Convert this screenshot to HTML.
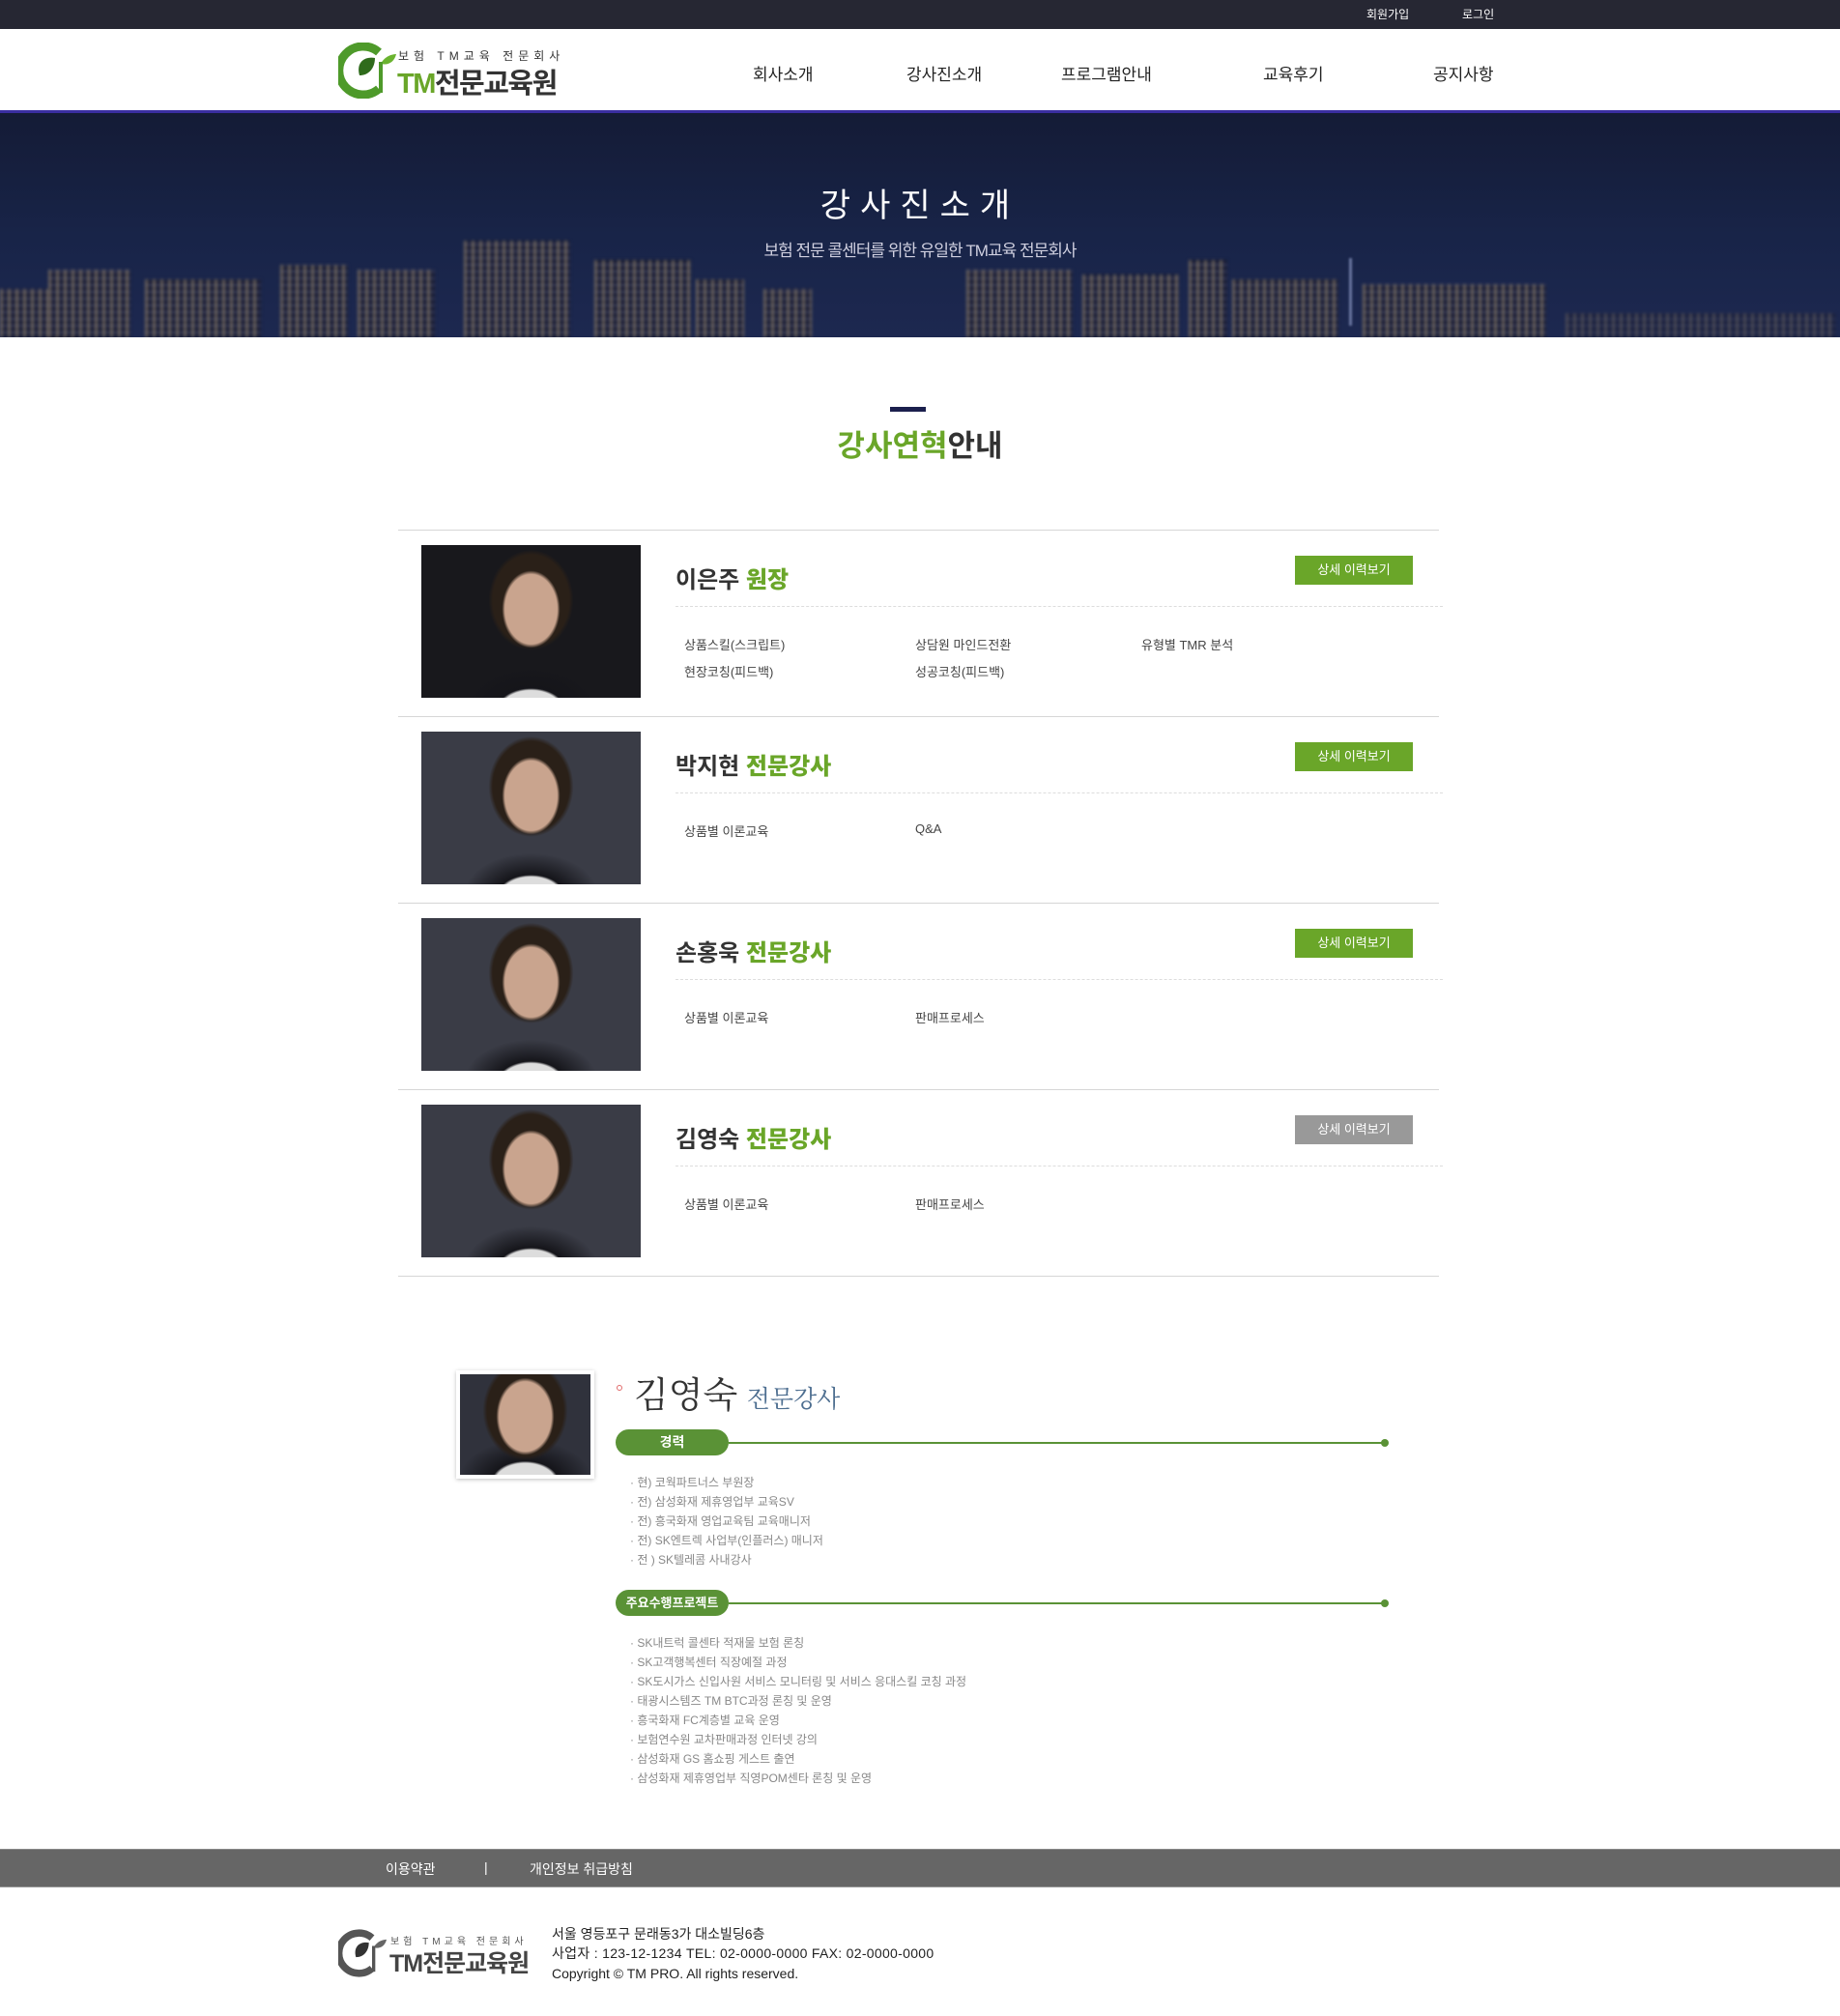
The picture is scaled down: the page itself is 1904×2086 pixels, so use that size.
<!DOCTYPE html>
<html><head><meta charset="utf-8"><style>
*{margin:0;padding:0;box-sizing:border-box}
body{width:1904px;height:2086px;position:relative;background:#fff;font-family:"Liberation Sans","Noto Sans CJK KR",sans-serif;color:#333;overflow:hidden}
.a{position:absolute;white-space:nowrap}
.top{left:0;top:0;width:1904px;height:30px;background:#262733}
.top span{position:absolute;top:6px;font-size:12px;color:#fff}
.nav{top:63px;font-size:17px;color:#222}
.banner{left:0;top:114px;width:1904px;height:235px;background:linear-gradient(#141b36,#182448 55%,#1d2850);border-top:3px solid #3a2ea0;overflow:hidden}
.bld{position:absolute;bottom:0;filter:blur(1.5px);background:repeating-linear-gradient(90deg,rgba(230,200,140,.35) 0 3px,transparent 3px 8px),repeating-linear-gradient(0deg,rgba(10,12,30,.6) 0 3px,transparent 3px 7px),#2c304c}
.row{left:412px;width:1077px;height:1px;background:#d6d6d6}
.photo{width:227px;height:158px;background:radial-gradient(ellipse 30px 40px at 50% 42%,#c9a48e 0 90%,transparent 100%),radial-gradient(ellipse 44px 52px at 50% 36%,#2a2018 0 90%,transparent 100%),radial-gradient(ellipse 70px 45px at 50% 108%,#ddd 0 45%,#15151a 50%,transparent 100%),#2c2d35}
.name{font-size:24px;font-weight:bold;color:#333}
.name b{color:#6aa629}
.btn{width:122px;height:30px;background:#6aa629;color:#fff;font-size:13px;text-align:center;line-height:30px}
.dot{left:699px;width:794px;border-top:1px dashed #ddd;height:0}
.it{font-size:13px;color:#444}
.pill{height:27px;border-radius:14px;background:#5a9236;color:#fff;font-size:14px;font-weight:bold;text-align:center;line-height:27px}
.gl{height:2px;background:#5a9236}
.gd{width:8px;height:8px;border-radius:50%;background:#5a9236}
.li{font-size:12px;color:#888;left:652px}
</style></head><body>
<div class="a top"><span style="left:1414px">회원가입</span><span style="left:1513px">로그인</span></div>

<svg class="a" style="left:350px;top:44px" width="60" height="58" viewBox="0 0 60 58"><path d="M42 10 A25 25 0 1 0 42 48" fill="none" stroke="#4e9a2a" stroke-width="9"/><path d="M22 34 C18 20 28 14 38 16 C38 26 32 34 22 34Z" fill="#2f6b1c"/><path d="M44 22 C48 14 56 12 60 12 C58 20 52 24 44 22Z" fill="#6ab32f"/><rect x="42" y="20" width="4" height="32" fill="#4e9a2a"/></svg>
<div class="a" style="left:412px;top:49px;font-size:12px;letter-spacing:5px;color:#333">보험 TM교육 전문회사</div>
<div class="a" style="left:411px;top:63px;font-size:29px;font-weight:bold;letter-spacing:-1.5px"><span style="color:#6aa629">TM</span><span style="color:#333">전문교육원</span></div>

<div class="a nav" style="left:779px">회사소개</div>
<div class="a nav" style="left:938px">강사진소개</div>
<div class="a nav" style="left:1098px">프로그램안내</div>
<div class="a nav" style="left:1307px">교육후기</div>
<div class="a nav" style="left:1483px">공지사항</div>

<div class="a banner">
<div class="bld" style="left:0;width:80px;height:50px"></div>
<div class="bld" style="left:50px;width:85px;height:70px"></div>
<div class="bld" style="left:150px;width:120px;height:60px"></div>
<div class="bld" style="left:290px;width:70px;height:75px"></div>
<div class="bld" style="left:370px;width:80px;height:70px"></div>
<div class="bld" style="left:480px;width:110px;height:100px"></div>
<div class="bld" style="left:615px;width:100px;height:80px"></div>
<div class="bld" style="left:720px;width:50px;height:60px"></div>
<div class="bld" style="left:790px;width:50px;height:50px"></div>
<div class="bld" style="left:1000px;width:110px;height:70px"></div>
<div class="bld" style="left:1120px;width:100px;height:65px"></div>
<div class="bld" style="left:1230px;width:40px;height:80px"></div>
<div class="bld" style="left:1275px;width:110px;height:60px"></div>
<div class="bld" style="left:1410px;width:190px;height:55px"></div>
<div class="bld" style="left:1620px;width:280px;height:25px;opacity:.6"></div>
<div style="position:absolute;left:1396px;top:150px;width:3px;height:70px;background:#6a76a0;filter:blur(1px)"></div>
<div class="a" style="left:0;width:1904px;top:68px;text-align:center;font-size:34px;color:#fff;letter-spacing:10px">강사진소개</div>
<div class="a" style="left:0;width:1904px;top:128px;text-align:center;font-size:17px;color:#d0d0e0;letter-spacing:-1px">보험 전문 콜센터를 위한 유일한 TM교육 전문회사</div>
</div>

<div class="a" style="left:921px;top:421px;width:37px;height:5px;background:#1b1f4d"></div>
<div class="a" style="left:0;width:1904px;top:436px;text-align:center;font-size:31px;font-weight:bold;color:#333"><span style="color:#6aa629">강사연혁</span>안내</div>

<div class="a row" style="top:548px"></div>
<div class="a row" style="top:741px"></div>
<div class="a row" style="top:934px"></div>
<div class="a row" style="top:1127px"></div>
<div class="a row" style="top:1320px"></div>

<div class="a photo" style="left:436px;top:564px;background-color:#18181c"></div>
<div class="a name" style="left:699px;top:580px">이은주 <b>원장</b></div>
<div class="a btn" style="left:1340px;top:575px">상세 이력보기</div>
<div class="a dot" style="top:627px"></div>
<div class="a it" style="left:708px;top:657px">상품스킬(스크립트)</div>
<div class="a it" style="left:947px;top:657px">상담원 마인드전환</div>
<div class="a it" style="left:1181px;top:657px">유형별 TMR 분석</div>
<div class="a it" style="left:708px;top:685px">현장코칭(피드백)</div>
<div class="a it" style="left:947px;top:685px">성공코칭(피드백)</div>

<div class="a photo" style="left:436px;top:757px;background-color:#3a3c46"></div>
<div class="a name" style="left:699px;top:773px">박지현 <b>전문강사</b></div>
<div class="a btn" style="left:1340px;top:768px">상세 이력보기</div>
<div class="a dot" style="top:820px"></div>
<div class="a it" style="left:708px;top:850px">상품별 이론교육</div>
<div class="a it" style="left:947px;top:850px">Q&amp;A</div>

<div class="a photo" style="left:436px;top:950px;background-color:#3a3c46"></div>
<div class="a name" style="left:699px;top:966px">손홍욱 <b>전문강사</b></div>
<div class="a btn" style="left:1340px;top:961px">상세 이력보기</div>
<div class="a dot" style="top:1013px"></div>
<div class="a it" style="left:708px;top:1043px">상품별 이론교육</div>
<div class="a it" style="left:947px;top:1043px">판매프로세스</div>

<div class="a photo" style="left:436px;top:1143px;background-color:#3a3c46"></div>
<div class="a name" style="left:699px;top:1159px">김영숙 <b>전문강사</b></div>
<div class="a btn" style="left:1340px;top:1154px;background:#999">상세 이력보기</div>
<div class="a dot" style="top:1206px"></div>
<div class="a it" style="left:708px;top:1236px">상품별 이론교육</div>
<div class="a it" style="left:947px;top:1236px">판매프로세스</div>

<div class="a" style="left:472px;top:1418px;width:143px;height:112px;background:#fff;box-shadow:0 1px 4px rgba(0,0,0,.25)"></div>
<div class="a photo" style="left:476px;top:1422px;width:135px;height:104px;background-color:#30323c;background-size:100% 100%"></div>
<div class="a" style="left:638px;top:1433px;width:6px;height:6px;border-radius:50%;border:1.5px solid #e06a6a"></div>
<div class="a" style="left:656px;top:1413px;font-size:37px;color:#333;font-family:'Noto Serif CJK SC','Liberation Serif',serif">김영숙 <span style="font-size:25px;color:#4d6e90">전문강사</span></div>

<div class="a pill" style="left:637px;top:1479px;width:117px">경력</div>
<div class="a gl" style="left:754px;top:1492px;width:678px"></div>
<div class="a gd" style="left:1429px;top:1489px"></div>
<div class="a li" style="top:1525px">· 현) 코웍파트너스 부원장</div>
<div class="a li" style="top:1545px">· 전) 삼성화재 제휴영업부 교육SV</div>
<div class="a li" style="top:1565px">· 전) 흥국화재 영업교육팀 교육매니저</div>
<div class="a li" style="top:1585px">· 전) SK엔트렉 사업부(인플러스) 매니저</div>
<div class="a li" style="top:1605px">· 전 ) SK텔레콤 사내강사</div>

<div class="a pill" style="left:637px;top:1645px;width:117px;font-size:13px">주요수행프로젝트</div>
<div class="a gl" style="left:754px;top:1658px;width:678px"></div>
<div class="a gd" style="left:1429px;top:1655px"></div>
<div class="a li" style="top:1691px">· SK내트럭 콜센타 적재물 보험 론칭</div>
<div class="a li" style="top:1711px">· SK고객행복센터 직장예절 과정</div>
<div class="a li" style="top:1731px">· SK도시가스 신입사원 서비스 모니터링 및 서비스 응대스킬 코칭 과정</div>
<div class="a li" style="top:1751px">· 태광시스템즈 TM BTC과정 론칭 및 운영</div>
<div class="a li" style="top:1771px">· 흥국화재 FC계층별 교육 운영</div>
<div class="a li" style="top:1791px">· 보험연수원 교차판매과정 인터넷 강의</div>
<div class="a li" style="top:1811px">· 삼성화재 GS 홈쇼핑 게스트 출연</div>
<div class="a li" style="top:1831px">· 삼성화재 제휴영업부 직영POM센타 론칭 및 운영</div>

<div class="a" style="left:0;top:1913px;width:1904px;height:40px;background:#666;border-top:1px solid #888;border-bottom:1px solid #999"></div>
<div class="a" style="left:399px;top:1924px;font-size:14px;color:#fff">이용약관</div>
<div class="a" style="left:501px;top:1924px;font-size:14px;color:#fff">|</div>
<div class="a" style="left:548px;top:1924px;font-size:14px;color:#fff">개인정보 취급방침</div>

<svg class="a" style="left:350px;top:1996px" width="50" height="50" viewBox="0 0 60 58"><path d="M42 10 A25 25 0 1 0 42 48" fill="none" stroke="#555" stroke-width="9"/><path d="M22 34 C18 20 28 14 38 16 C38 26 32 34 22 34Z" fill="#333"/><path d="M44 22 C48 14 56 12 60 12 C58 20 52 24 44 22Z" fill="#666"/><rect x="42" y="20" width="4" height="32" fill="#555"/></svg>
<div class="a" style="left:404px;top:2000px;font-size:10px;letter-spacing:4px;color:#555">보험 TM교육 전문회사</div>
<div class="a" style="left:403px;top:2012px;font-size:25px;font-weight:bold;color:#444;letter-spacing:-1px">TM전문교육원</div>
<div class="a" style="left:571px;top:1991px;font-size:14px;color:#222">서울 영등포구 문래동3가 대소빌딩6층</div>
<div class="a" style="left:571px;top:2011px;font-size:14px;color:#222;letter-spacing:.3px">사업자 : 123-12-1234 TEL: 02-0000-0000 FAX: 02-0000-0000</div>
<div class="a" style="left:571px;top:2034px;font-size:14px;color:#222">Copyright © TM PRO. All rights reserved.</div>
</body></html>
